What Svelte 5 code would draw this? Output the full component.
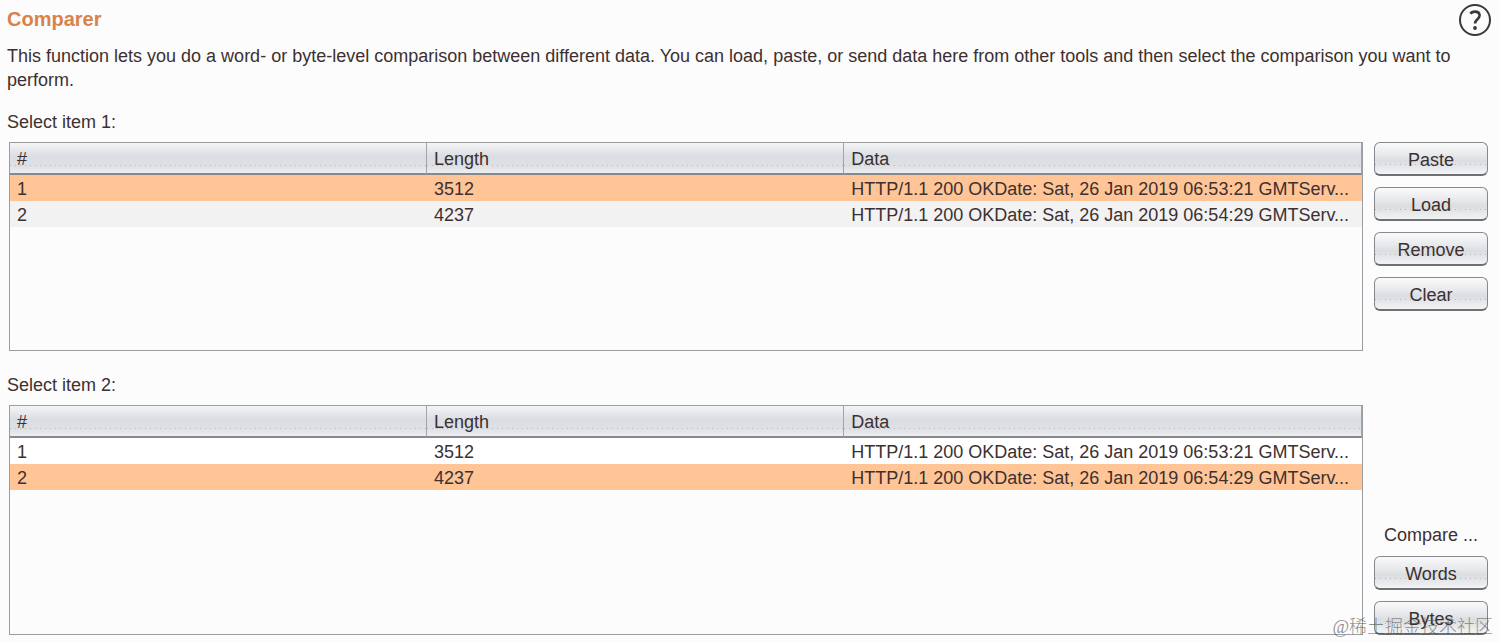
<script>
  const rows = [
    { id: 1, length: 3512, data: 'HTTP/1.1 200 OKDate: Sat, 26 Jan 2019 06:53:21 GMTServ...' },
    { id: 2, length: 4237, data: 'HTTP/1.1 200 OKDate: Sat, 26 Jan 2019 06:54:29 GMTServ...' }
  ];
  let first = $state(1);
  let second = $state(2);
</script>

{#snippet itemTable(labelId, selected, pick)}
  <div class="panel">
    <table aria-labelledby={labelId}>
      <colgroup><col class="narrow" /><col class="narrow" /><col /></colgroup>
      <thead>
        <tr><th>#</th><th>Length</th><th>Data</th></tr>
      </thead>
      <tbody>
        {#each rows as row (row.id)}
          <tr class:selected={row.id === selected} onclick={() => pick(row.id)}>
            <td>{row.id}</td>
            <td>{row.length}</td>
            <td>{row.data}</td>
          </tr>
        {/each}
      </tbody>
    </table>
  </div>
{/snippet}

<main>
  <header>
    <h1>Comparer</h1>
    <button class="help" aria-label="Help">
      <svg viewBox="0 0 34 34" width="34" height="34" fill="none" stroke="#3c3838" aria-hidden="true">
        <circle cx="17" cy="17" r="15" stroke-width="2" />
        <path d="M12.4 10.8C13.4 9.2 15 8.6 16.8 8.6C19.8 8.6 21.6 10.2 21.6 12.6C21.6 16.2 17 16.4 17 20.6" stroke-width="2.6" />
        <circle cx="17" cy="25" r="1.9" fill="#3c3838" stroke="none" />
      </svg>
    </button>
  </header>
  <p class="intro">
    This function lets you do a word- or byte-level comparison between different data. You can load,
    paste, or send data here from other tools and then select the comparison you want to perform.
  </p>

  <section class="first">
    <h2 id="item-1">Select item 1:</h2>
    <div class="body">
      {@render itemTable('item-1', first, (id) => (first = id))}
      <div class="actions">
        <button class="btn">Paste</button>
        <button class="btn">Load</button>
        <button class="btn">Remove</button>
        <button class="btn">Clear</button>
      </div>
    </div>
  </section>

  <section class="second">
    <h2 id="item-2">Select item 2:</h2>
    <div class="body">
      {@render itemTable('item-2', second, (id) => (second = id))}
      <div class="actions bottom">
        <span class="compare">Compare ...</span>
        <button class="btn">Words</button>
        <button class="btn">Bytes</button>
      </div>
    </div>
  </section>

  <div class="watermark">@稀土掘金技术社区</div>
</main>

<style>
  :global(body) {
    margin: 0;
    background: #fcfcfc;
  }
  main {
    position: relative;
    box-sizing: border-box;
    min-height: 100vh;
    padding: 0 8px 7px 7px;
    display: flex;
    flex-direction: column;
    font: 18px/24px 'Liberation Sans', Arial, sans-serif;
    color: #3c3030;
  }
  header {
    display: flex;
    justify-content: space-between;
    align-items: flex-start;
    height: 44px;
  }
  h1 {
    margin: 7px 0 0;
    font-size: 20px;
    line-height: 24px;
    color: #d9824b;
  }
  .help {
    margin: 3px 0 0;
    padding: 0;
    border: 0;
    background: none;
    line-height: 0;
  }
  .intro {
    margin: 0 32px 18px 0;
  }
  section {
    display: flex;
    flex-direction: column;
  }
  .first {
    margin-bottom: 22px;
  }
  .second {
    flex: 1;
  }
  h2 {
    margin: 0 0 8px;
    font-size: 18px;
    line-height: 24px;
    font-weight: normal;
  }
  .body {
    flex: 1;
    display: flex;
    gap: 11px;
    padding: 0 4px 0 2px;
  }
  .panel {
    box-sizing: border-box;
    flex: 1;
    min-height: 209px;
    border: 1px solid #9a9da2;
  }
  table {
    width: 100%;
    border-collapse: separate;
    border-spacing: 0;
    table-layout: fixed;
  }
  .narrow {
    width: 30.85%;
  }
  th,
  td {
    box-sizing: border-box;
    padding: 2px 7px 0;
    text-align: left;
    font-weight: normal;
    white-space: nowrap;
    overflow: hidden;
    text-overflow: ellipsis;
  }
  th {
    height: 32px;
    border-right: 1px solid #a0a4aa;
    border-bottom: 2px solid #85888d;
    background:
      repeating-linear-gradient(90deg, #b4b8be 0 1px, transparent 1px 5px) 0 22px / 100% 1px no-repeat,
      linear-gradient(#f4f5f6, #dadde2 45%, #dde0e4 75%, #eceef0);
  }
  td {
    height: 26px;
    line-height: 24px;
    cursor: default;
  }
  tbody tr {
    background: #fff;
  }
  tbody tr:nth-child(even) {
    background: #f2f2f2;
  }
  tbody tr.selected {
    background: #ffc596;
  }
  .actions {
    width: 114px;
    display: flex;
    flex-direction: column;
    gap: 11px;
  }
  .bottom {
    justify-content: flex-end;
  }
  .compare {
    text-align: center;
    line-height: 20px;
  }
  .btn {
    box-sizing: border-box;
    height: 34px;
    padding: 2px 0 0;
    border: 1px solid #85888d;
    border-bottom: 2px solid #6e7074;
    border-radius: 6px;
    background:
      repeating-linear-gradient(90deg, #b4b8be 0 1px, transparent 1px 5px) 0 21px / 100% 1px no-repeat,
      linear-gradient(#fafafb, #e6e8eb 40%, #dadde1 58%, #f2f3f4);
    font: inherit;
    color: inherit;
  }
  .watermark {
    position: absolute;
    right: 7px;
    bottom: 1px;
    font: 300 18px/28px 'Liberation Serif', 'Noto Sans CJK SC', serif;
    color: rgba(70, 70, 70, 0.6);
    pointer-events: none;
  }
</style>
